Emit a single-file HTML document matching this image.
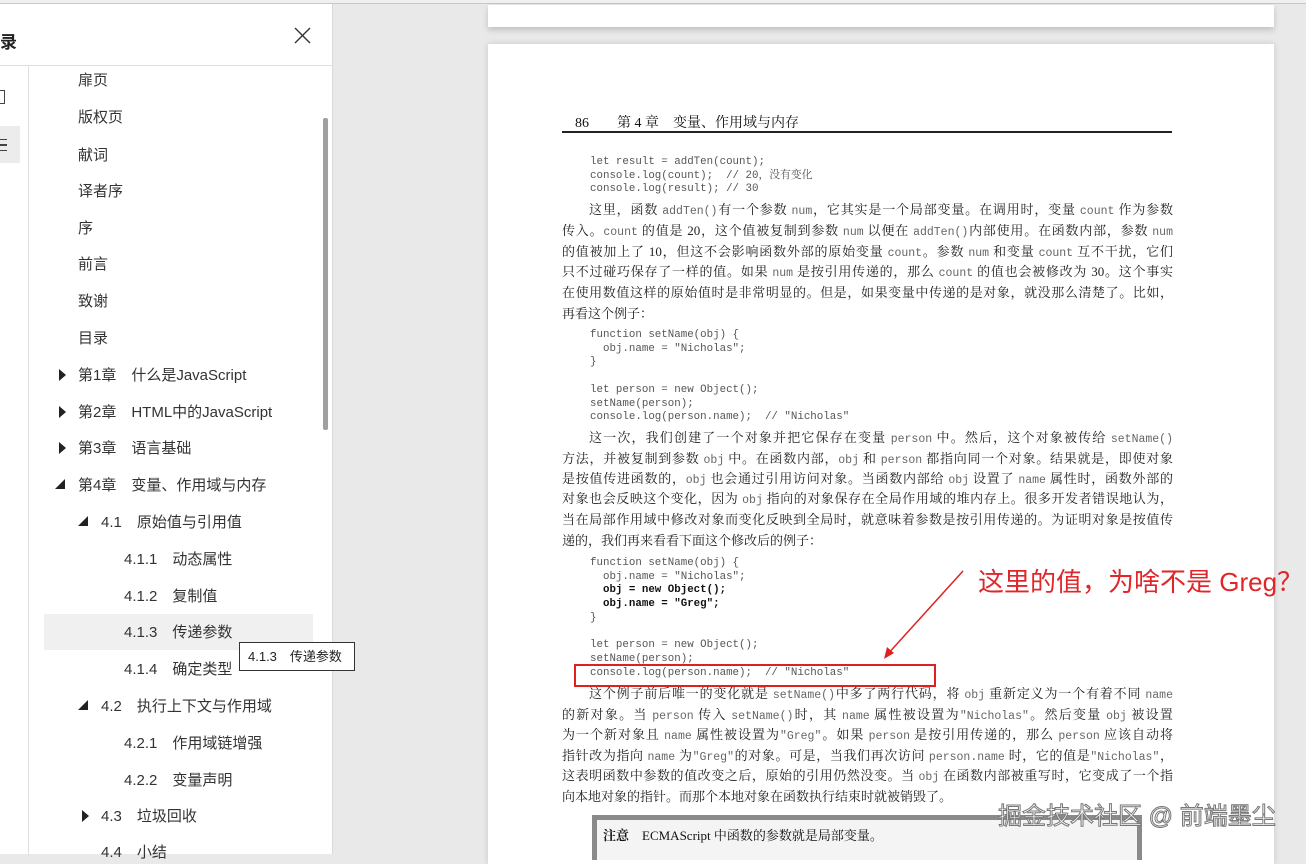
<!DOCTYPE html>
<html><head><meta charset="utf-8"><style>
*{margin:0;padding:0;box-sizing:border-box}
body{width:1306px;height:854px;overflow:hidden;position:relative;background:#e9e9e9;font-family:"Liberation Sans","Noto Sans CJK SC",sans-serif}
.a{position:absolute;white-space:nowrap}
#side{position:absolute;left:0;top:4px;width:333px;height:850px;background:#fff;border-right:1px solid #d8d8d8}
.t{position:absolute;font-size:15px;color:#333;line-height:20px;white-space:nowrap}
.tri{position:absolute;width:0;height:0}
.p{position:absolute;left:562px;width:611px;height:19px;overflow:hidden;font-family:"Liberation Serif","Noto Serif CJK SC",serif;font-size:13px;color:#222;line-height:18px;white-space:nowrap}
.j{text-align:justify;text-align-last:justify;white-space:normal}
.c{font-family:"Liberation Mono",monospace;font-size:11.5px;color:#666}
.code{position:absolute;left:590px;font-family:"Liberation Mono","Noto Serif CJK SC",monospace;font-size:10.8px;color:#555;line-height:13.7px;white-space:pre}
.code b{color:#111}
</style></head><body>
<div class="a" style="left:0;top:0;width:1306px;height:4px;background:#f0f0f0;border-bottom:1px solid #c8c8c8"></div>
<div id="side">
 <div class="a" style="left:0;top:24px;font-size:17px;font-weight:bold;color:#222">录</div>
 <svg class="a" style="left:294px;top:23px" width="17" height="17"><path d="M1 1L16 16M16 1L1 16" stroke="#333" stroke-width="1.4"/></svg>
 <div class="a" style="left:0;top:61px;width:333px;height:1px;background:#e0e0e0"></div>
 <div class="a" style="left:28px;top:62px;width:1px;height:790px;background:#e0e0e0"></div>
 <div class="a" style="left:0;top:122px;width:20px;height:37px;background:#ececec"></div>
 <div class="a" style="left:0;top:86px;width:5px;height:14px;border:1.5px solid #444;border-left:none"></div>
 <div class="a" style="left:0;top:135px;width:7px;height:12px;border-top:1.5px solid #444;border-bottom:1.5px solid #444"></div>
 <div class="a" style="left:0;top:140px;width:7px;height:1.5px;background:#444"></div>
 <div class="a" style="left:323px;top:114px;width:5px;height:312px;background:#a0a0a0;border-radius:2px"></div>
 <div class="a" style="left:44px;top:610px;width:269px;height:36px;background:#f0f0f0"></div>
</div>
<div class="t" style="left:78px;top:71px">扉页</div>
<div class="t" style="left:78px;top:108px">版权页</div>
<div class="t" style="left:78px;top:146px">献词</div>
<div class="t" style="left:78px;top:182px">译者序</div>
<div class="t" style="left:78px;top:219px">序</div>
<div class="t" style="left:78px;top:255px">前言</div>
<div class="t" style="left:78px;top:292px">致谢</div>
<div class="t" style="left:78px;top:329px">目录</div>
<div class="tri" style="left:59px;top:369px;border-left:7px solid #222;border-top:6px solid transparent;border-bottom:6px solid transparent"></div>
<div class="t" style="left:78px;top:366px">第1章　什么是JavaScript</div>
<div class="tri" style="left:59px;top:406px;border-left:7px solid #222;border-top:6px solid transparent;border-bottom:6px solid transparent"></div>
<div class="t" style="left:78px;top:403px">第2章　HTML中的JavaScript</div>
<div class="tri" style="left:59px;top:442px;border-left:7px solid #222;border-top:6px solid transparent;border-bottom:6px solid transparent"></div>
<div class="t" style="left:78px;top:439px">第3章　语言基础</div>
<div class="tri" style="left:55px;top:479px;border-right:10px solid #222;border-top:10px solid transparent"></div>
<div class="t" style="left:78px;top:476px">第4章　变量、作用域与内存</div>
<div class="tri" style="left:78px;top:516px;border-right:10px solid #222;border-top:10px solid transparent"></div>
<div class="t" style="left:101px;top:513px">4.1　原始值与引用值</div>
<div class="t" style="left:124px;top:550px">4.1.1　动态属性</div>
<div class="t" style="left:124px;top:587px">4.1.2　复制值</div>
<div class="t" style="left:124px;top:623px">4.1.3　传递参数</div>
<div class="t" style="left:124px;top:660px">4.1.4　确定类型</div>
<div class="tri" style="left:78px;top:700px;border-right:10px solid #222;border-top:10px solid transparent"></div>
<div class="t" style="left:101px;top:697px">4.2　执行上下文与作用域</div>
<div class="t" style="left:124px;top:734px">4.2.1　作用域链增强</div>
<div class="t" style="left:124px;top:771px">4.2.2　变量声明</div>
<div class="tri" style="left:82px;top:810px;border-left:7px solid #222;border-top:6px solid transparent;border-bottom:6px solid transparent"></div>
<div class="t" style="left:101px;top:807px">4.3　垃圾回收</div>
<div class="t" style="left:101px;top:843px">4.4　小结</div>
<div class="a" style="left:239px;top:642px;width:116px;height:29px;background:#fff;border:1px solid #333;font-size:13px;color:#222;line-height:27px;padding-left:8px">4.1.3　传递参数</div>

<div class="a" style="left:488px;top:5px;width:786px;height:22px;background:#fff;box-shadow:0 3px 6px rgba(0,0,0,.18)"></div>
<div class="a" style="left:488px;top:44px;width:786px;height:820px;background:#fff;box-shadow:0 0 6px rgba(0,0,0,.15)"></div>

<div class="a" style="left:575px;top:112px;font-family:'Liberation Serif','Noto Serif CJK SC',serif;font-size:14px;color:#111">86　　第 4 章　变量、作用域与内存</div>
<div class="a" style="left:562px;top:131px;width:610px;height:1.5px;background:#222"></div>

<div class="code" style="top:156px">let result = addTen(count);
console.log(count);  // 20，没有变化
console.log(result); // 30</div>

<div class="p j" style="top:201px;text-indent:27px">这里，函数 <span class="c">addTen()</span>有一个参数 <span class="c">num</span>，它其实是一个局部变量。在调用时，变量 <span class="c">count</span> 作为参数</div>
<div class="p j" style="top:222px">传入。<span class="c">count</span> 的值是 20，这个值被复制到参数 <span class="c">num</span> 以便在 <span class="c">addTen()</span>内部使用。在函数内部，参数 <span class="c">num</span></div>
<div class="p j" style="top:243px">的值被加上了 10，但这不会影响函数外部的原始变量 <span class="c">count</span>。参数 <span class="c">num</span> 和变量 <span class="c">count</span> 互不干扰，它们</div>
<div class="p j" style="top:263px">只不过碰巧保存了一样的值。如果 <span class="c">num</span> 是按引用传递的，那么 <span class="c">count</span> 的值也会被修改为 30。这个事实</div>
<div class="p j" style="top:284px">在使用数值这样的原始值时是非常明显的。但是，如果变量中传递的是对象，就没那么清楚了。比如，</div>
<div class="p" style="top:305px">再看这个例子：</div>

<div class="code" style="top:329px">function setName(obj) {
  obj.name = "Nicholas";
}

let person = new Object();
setName(person);
console.log(person.name);  // "Nicholas"</div>

<div class="p j" style="top:429px;text-indent:27px">这一次，我们创建了一个对象并把它保存在变量 <span class="c">person</span> 中。然后，这个对象被传给 <span class="c">setName()</span></div>
<div class="p j" style="top:450px">方法，并被复制到参数 <span class="c">obj</span> 中。在函数内部，<span class="c">obj</span> 和 <span class="c">person</span> 都指向同一个对象。结果就是，即使对象</div>
<div class="p j" style="top:470px">是按值传进函数的，<span class="c">obj</span> 也会通过引用访问对象。当函数内部给 <span class="c">obj</span> 设置了 <span class="c">name</span> 属性时，函数外部的</div>
<div class="p j" style="top:490px">对象也会反映这个变化，因为 <span class="c">obj</span> 指向的对象保存在全局作用域的堆内存上。很多开发者错误地认为，</div>
<div class="p j" style="top:511px">当在局部作用域中修改对象而变化反映到全局时，就意味着参数是按引用传递的。为证明对象是按值传</div>
<div class="p" style="top:532px">递的，我们再来看看下面这个修改后的例子：</div>

<div class="code" style="top:557px">function setName(obj) {
  obj.name = "Nicholas";
  <b>obj = new Object();</b>
  <b>obj.name = "Greg";</b>
}

let person = new Object();
setName(person);
console.log(person.name);  // "Nicholas"</div>

<div class="a" style="left:574px;top:664px;width:362px;height:23px;border:2px solid #e02020"></div>
<svg class="a" style="left:880px;top:568px" width="90" height="95"><path d="M83 3L6 88" stroke="#e02020" stroke-width="1.5" fill="none"/><path d="M4 91L7 79L14 85Z" fill="#e02020"/></svg>
<div class="a" style="left:978px;top:565px;font-size:26px;color:#e0262a;line-height:34px">这里的值，为啥不是 Greg？</div>

<div class="p j" style="top:685px;text-indent:27px">这个例子前后唯一的变化就是 <span class="c">setName()</span>中多了两行代码，将 <span class="c">obj</span> 重新定义为一个有着不同 <span class="c">name</span></div>
<div class="p j" style="top:706px">的新对象。当 <span class="c">person</span> 传入 <span class="c">setName()</span>时，其 <span class="c">name</span> 属性被设置为<span class="c">"Nicholas"</span>。然后变量 <span class="c">obj</span> 被设置</div>
<div class="p j" style="top:726px">为一个新对象且 <span class="c">name</span> 属性被设置为<span class="c">"Greg"</span>。如果 <span class="c">person</span> 是按引用传递的，那么 <span class="c">person</span> 应该自动将</div>
<div class="p j" style="top:747px">指针改为指向 <span class="c">name</span> 为<span class="c">"Greg"</span>的对象。可是，当我们再次访问 <span class="c">person.name</span> 时，它的值是<span class="c">"Nicholas"</span>，</div>
<div class="p j" style="top:767px">这表明函数中参数的值改变之后，原始的引用仍然没变。当 <span class="c">obj</span> 在函数内部被重写时，它变成了一个指</div>
<div class="p" style="top:788px">向本地对象的指针。而那个本地对象在函数执行结束时就被销毁了。</div>

<div class="a" style="left:592px;top:815px;width:550px;height:45px;border:5px solid #8a8a8a;border-bottom:none;background:#f4f4f4"></div>
<div class="a" style="left:603px;top:825px;font-family:'Liberation Serif','Noto Serif CJK SC',serif;font-size:13px;color:#111"><b>注意</b>　ECMAScript 中函数的参数就是局部变量。</div>

<div class="a" style="left:998px;top:801px;font-size:24px;color:#fff;-webkit-text-stroke:1px #777;line-height:32px">掘金技术社区 @ 前端墨尘</div>
</body></html>
